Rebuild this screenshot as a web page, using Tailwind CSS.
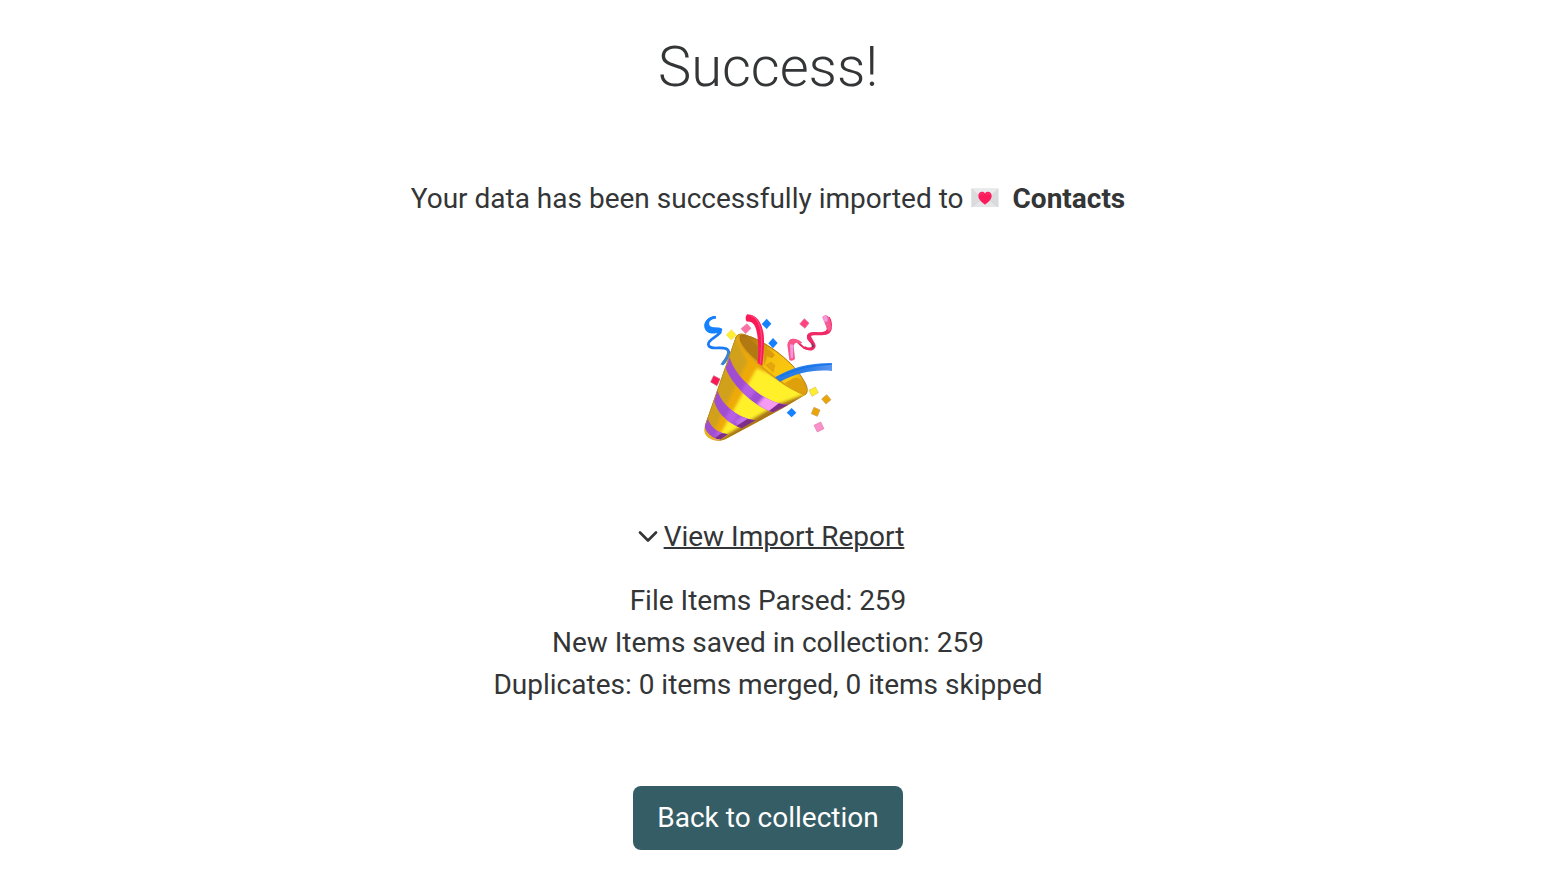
<!DOCTYPE html>
<html lang="en">
<head>
    <meta charset="UTF-8">
    <meta name="viewport" content="width=device-width, initial-scale=1.0">
    <title>Import complete</title>
    <script src="https://cdn.jsdelivr.net/npm/@tailwindcss/browser@4"></script>
</head>
<body class="bg-white text-[#333536] font-[Roboto,sans-serif]">
    <main class="flex flex-col items-center pt-8 pb-9 pr-[18px] text-[28px] leading-[42px] text-center">
        <h1 class="text-[56px] leading-[70px] font-light">Success!</h1>

        <p class="mt-[76px] flex items-center">
            <span>Your data has been successfully imported to</span>
            <!-- Love letter -->
            <svg class="ml-[7px] mr-[14px] mb-0.5 w-7 h-5" viewBox="0 0 84 60" aria-hidden="true">
                <rect x="1" y="2" width="81" height="55" rx="2" fill="#dedfe0"/>
                <path d="M2 3 L36 32 L2 56Z" fill="#d9dbdc"/>
                <path d="M82 3 L48 32 L82 56Z" fill="#d9dbdc"/>
                <path d="M2 57 L34 31 Q42 26 50 31 L82 57Z" fill="#e4e5e6"/>
                <path d="M2 57 L34 31 M82 57 L50 31" stroke="#c8cacc" stroke-width="1.5" fill="none"/>
                <path d="M2 2 H82 L48 34 Q42 39 36 34Z" fill="#e9eaeb" stroke="#d0d2d4" stroke-width="1"/>
                <path d="M42 50 C34 44 22 35 22 24 C22 10 38 8 42 17 C46 8 62 10 62 24 C62 35 50 44 42 50Z" fill="#fb1b5b"/>
                <path d="M26 22 C27 15 34 14 37 20 M47 20 C50 14 56 15 57 21" stroke="#ff3f76" stroke-width="3" fill="none"/>
            </svg>
            <strong class="font-bold">Contacts</strong>
        </p>

        <!-- Party popper -->
        <svg class="mt-[94px] size-32" viewBox="42 27 384 384" role="img" aria-label="Party popper">
            <defs>
                <linearGradient id="inside" x1="150" y1="100" x2="345" y2="245" gradientUnits="userSpaceOnUse">
                    <stop offset="0" stop-color="#a87114"/>
                    <stop offset=".25" stop-color="#c98a12"/>
                    <stop offset=".45" stop-color="#f6c00e"/>
                    <stop offset=".8" stop-color="#fbc90f"/>
                    <stop offset="1" stop-color="#d0930f"/>
                </linearGradient>
                <linearGradient id="streamer" x1="260" y1="0" x2="426" y2="0" gradientUnits="userSpaceOnUse">
                    <stop offset="0" stop-color="#2879e4"/>
                    <stop offset=".6" stop-color="#2f7fe9"/>
                    <stop offset="1" stop-color="#5c95ef"/>
                </linearGradient>
                <filter id="shade" x="-10%" y="-10%" width="120%" height="120%">
                    <feGaussianBlur stdDeviation="4"/>
                </filter>
                <clipPath id="cone-clip">
                    <path d="M137 97 C141 86 156 84 174 93 C230 110 315 175 342 228 C352 244 356 260 346 269 L278 310 L107 402 C88 412 62 408 49 391 C42 382 42 370 46 358 Z"/>
                </clipPath>
                <clipPath id="bands-clip">
                    <path d="M119 155 C130 205 190 258 230 280 C252 293 275 299 295 299 L249 322 C200 308 130 248 107 190Z"/>
                    <path d="M82 254 C92 295 140 338 196 346 L155 370 C118 357 80 325 72 286Z"/>
                    <path d="M53 336 C58 362 80 384 114 388 L88 405 C64 398 46 380 44 362Z"/>
                </clipPath>
            </defs>

            <!-- Blue curl, left -->
            <path d="M77 37 C56 38 42 55 50 70 C58 84 82 77 91 82 C77 99 54 104 55 118 C57 137 91 124 109 131 C125 140 112 160 96 179" fill="none" stroke="#1a79f4" stroke-width="8" stroke-linejoin="round"/>
            <path d="M78 34 C53 31 39 54 44 70 C51 91 75 85 85 84 C98 82 100 72 92 69 C79 64 61 70 58 59 C55 48 67 40 78 40Z" fill="#1782ff"/>
            <path d="M110 130 C126 141 118 159 105 176 L91 179 C101 165 117 144 109 136Z" fill="#3d83cd"/>

            <!-- Cone -->
            <g clip-path="url(#cone-clip)">
                <rect x="30" y="70" width="340" height="350" fill="#eeaa09"/>
                <g filter="url(#shade)">
                    <path d="M120 60 L172 170 L62 400 L20 400Z" fill="#d1a11c"/>
                    <path d="M200 190 L235 205 L345 265 L270 300 L100 394 L84 400Z" fill="#fff02c"/>
                    <path d="M370 262 L322 276 L262 298 L108 389 L70 420 L370 330Z" fill="#a97512"/>
                </g>
                <g clip-path="url(#bands-clip)">
                    <rect x="30" y="140" width="290" height="280" fill="#a04dd2"/>
                    <g filter="url(#shade)">
                        <path d="M180 215 L215 230 L110 380 L70 400Z" fill="#b75fe4"/>
                        <path d="M240 255 L310 285 L240 330 L200 300Z" fill="#f59bf2"/>
                        <path d="M165 325 L190 340 L150 370 L135 350Z" fill="#c271ea"/>
                    </g>
                    <path d="M272 290 L310 290 L250 330 L232 322Z" fill="#7d2f88"/>
                    <path d="M176 340 L210 340 L150 380 L138 364Z" fill="#7d2f88"/>
                    <path d="M92 386 L120 380 L90 412 L76 398Z" fill="#7d2f88"/>
                </g>
                <path d="M44 372 Q56 396 88 405 L72 414 L40 400Z" fill="#eab31c"/>
                <path d="M66 406 Q76 402 90 405" fill="none" stroke="#e8a07a" stroke-width="4"/>
                <path d="M137 97 L46 358" fill="none" stroke="#b68a1b" stroke-width="4"/>
            </g>
            <path d="M148 92 C146 110 162 134 182 152 C222 192 290 246 345 268 C361 238 309 173 252 133 C204 99 161 82 148 92Z" fill="url(#inside)"/>
            <path d="M151 92 Q190 108 204 122 L206 172 Q160 135 151 92Z" fill="#b27913"/>
            <path d="M223 126 Q249 142 255 150 L246 160 L231 153 L222 184Z" fill="#db9a0e"/>
            <path d="M225 180 L243 170 L256 180 L250 203Z" fill="#e5a50c"/>
            <path d="M306 222 Q328 208 345 245 Q353 265 340 264 Q310 255 285 234Z" fill="#dfa00c"/>
            <path d="M146 92 C144 110 160 136 182 154 C222 195 290 250 345 269" fill="none" stroke="#d99f16" stroke-width="5"/>
            <path d="M137 99 C143 85 157 84 174 93 C230 110 315 175 342 228 C352 244 356 260 346 269" fill="none" stroke="#b17a18" stroke-width="3"/>

            <!-- Streamers from the cone -->
            <path d="M172 28 C199 29 216 52 221 88 C224 119 220 151 217 182 L203 174 C205 151 207 108 199 76 C195 58 184 48 171 50 C165 44 166 33 172 28Z" fill="#fb1957"/>
            <path d="M182 32 C202 36 211 63 214 88 C217 119 213 151 211 176" fill="none" stroke="#f9457c" stroke-width="4"/>
            <path d="M426 174 C360 173 306 187 255 217 L270 230 C322 203 371 193 426 198Z" fill="url(#streamer)"/>
            <path d="M271 214 C320 190 369 179 425 177" fill="none" stroke="#1476ed" stroke-width="5"/>

            <!-- Pink curl, right -->
            <path d="M300 108 C318 91 334 134 354 132 C388 129 366 118 355 101 C353 75 386 93 411 81" fill="none" stroke="#ec1f5e" stroke-width="6"/>
            <path d="M351 91 C357 76 381 82 396 82 C420 77 407 65 405 47 L419 35 C428 51 431 78 414 87 C401 94 376 88 363 93 C368 109 387 122 370 134 C361 139 350 136 338 129 L345 124 C355 130 369 129 366 121 C363 112 348 105 351 91Z" fill="#f02a66"/>
            <path d="M292 119 Q294 101 312 101 Q327 102 337 113 L329 117 Q315 107 311 122 L315 162 Q306 170 298 165Z" fill="#f9558a"/>
            <path d="M300 118 L310 119 L309 160 L302 160Z" fill="#ee99e2"/>
            <path d="M397 37 C403 28 415 29 419 42 L426 68 L416 80 L408 64Z" fill="#f65c92"/>
            <path d="M398 37 C403 30 412 31 413 42 L412 50 L403 50Z" fill="#f29ce0"/>
            <path d="M365 112 L373 124 L365 129Z" fill="#783568"/>

            <!-- Confetti -->
            <path d="M124 74 L139 90 L124 105 L109 90Z" fill="#ffef2d" stroke="#efd878" stroke-width="2"/>
            <path d="M171 56 L183 70 L167 86 L153 71Z" fill="#fb70a5" stroke="#d78ca8" stroke-width="2"/>
            <path d="M230 41 L244 56 L230 72 L215 57Z" fill="#1681ff"/>
            <path d="M249 99 L263 114 L249 130 L235 115Z" fill="#1681ff"/>
            <path d="M343 41 L357 54 L345 70 L329 57Z" fill="#ff437e" stroke="#e47097" stroke-width="2"/>
            <path d="M71 212 L90 222 L81 242 L62 231Z" fill="#fc1856" stroke="#c55a70" stroke-width="2"/>
            <path d="M376 246 L385 263 L366 274 L357 256Z" fill="#ffed31" stroke="#dfc24d" stroke-width="2"/>
            <path d="M410 269 L423 284 L408 297 L395 282Z" fill="#e9a608" stroke="#c69a56" stroke-width="2"/>
            <path d="M372 307 L390 315 L382 334 L364 326Z" fill="#e9a608" stroke="#c69a56" stroke-width="2"/>
            <path d="M305 309 L319 323 L305 337 L290 323Z" fill="#1681ff"/>
            <path d="M392 351 L402 371 L382 381 L372 361Z" fill="#fb91cd" stroke="#df7ba0" stroke-width="2"/>
        </svg>

        <button type="button" aria-expanded="true" aria-controls="import-report" class="mt-[74px] flex items-center gap-1.5 cursor-pointer">
            <svg class="w-5 h-3 ml-1.5" viewBox="0 0 20 12" fill="none" stroke="currentColor" stroke-width="2.6" stroke-linecap="round" stroke-linejoin="round" aria-hidden="true">
                <path d="M2 1.5 L10 9.5 L18 1.5"/>
            </svg>
            <span class="underline decoration-2">View Import Report</span>
        </button>

        <div id="import-report" class="mt-[22px]">
            <p>File Items Parsed: 259</p>
            <p>New Items saved in collection: 259</p>
            <p>Duplicates: 0 items merged, 0 items skipped</p>
        </div>

        <button type="button" class="mt-20 h-16 px-6 rounded-lg bg-[#355d66] text-white cursor-pointer">Back to collection</button>
    </main>
</body>
</html>
